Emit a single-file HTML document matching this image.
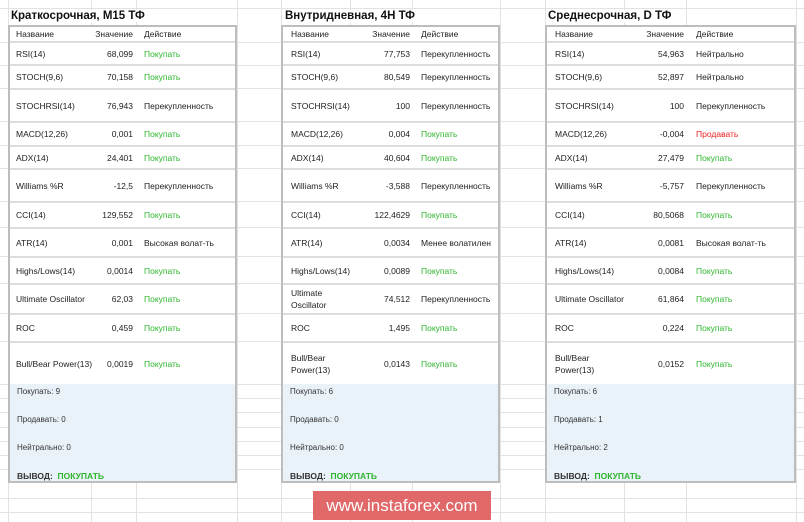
<!DOCTYPE html>
<html><head><meta charset="utf-8"><style>
body{margin:0;width:804px;height:522px;background:#fff;position:relative;overflow:hidden;font-family:"Liberation Sans",Arial,sans-serif;}
.hl{position:absolute;left:0;width:804px;height:1px;background:#e2e2e2}
.vl{position:absolute;top:0;height:522px;width:1px;background:#e2e2e2}
.title{position:absolute;top:10px;font-size:11.5px;font-weight:bold;color:#111;background:#fff}
.p{position:absolute;top:25px;height:458px;border:2px solid #bdbdbd;background:#fff;box-sizing:border-box}
.r{position:absolute;left:0;right:0;border-bottom:2px solid #ddd;box-sizing:border-box;font-size:8.5px;color:#222;font-weight:normal}
.r span{position:absolute;top:50%;transform:translateY(-50%);line-height:12px}
.g{color:#2db52d}.red{color:#e82020}
.s{position:absolute;left:0;right:0;top:357px;bottom:0;background:#eaf2f9}
.s div{position:absolute;left:7px;font-size:8px;color:#333}
.wm{position:absolute;left:313px;top:491px;width:178px;height:29px;background:#e06868;color:#fff;font-size:17px;text-align:center;line-height:29px}
</style></head><body>
<div class="hl" style="top:8px"></div><div class="hl" style="top:42px"></div><div class="hl" style="top:65px"></div><div class="hl" style="top:88px"></div><div class="hl" style="top:121px"></div><div class="hl" style="top:145px"></div><div class="hl" style="top:168px"></div><div class="hl" style="top:201px"></div><div class="hl" style="top:227px"></div><div class="hl" style="top:256px"></div><div class="hl" style="top:283px"></div><div class="hl" style="top:313px"></div><div class="hl" style="top:341px"></div><div class="hl" style="top:384px"></div><div class="hl" style="top:398px"></div><div class="hl" style="top:412px"></div><div class="hl" style="top:427px"></div><div class="hl" style="top:441px"></div><div class="hl" style="top:455px"></div><div class="hl" style="top:469px"></div><div class="hl" style="top:498px"></div><div class="hl" style="top:512px"></div>
<div class="vl" style="left:8px"></div><div class="vl" style="left:91px"></div><div class="vl" style="left:136px"></div><div class="vl" style="left:237px"></div><div class="vl" style="left:281px"></div><div class="vl" style="left:350px"></div><div class="vl" style="left:412px"></div><div class="vl" style="left:500px"></div><div class="vl" style="left:545px"></div><div class="vl" style="left:624px"></div><div class="vl" style="left:686px"></div><div class="vl" style="left:796px"></div>

<div class="title" style="left:11px">Краткосрочная, M15 ТФ</div>
<div class="title" style="left:285px">Внутридневная, 4H ТФ</div>
<div class="title" style="left:548px">Среднесрочная, D ТФ</div>

<!-- Panel 1 -->
<div class="p" style="left:8px;width:229px">
<div class="r" style="top:0;height:16px"><span style="left:6px">Название</span><span style="right:102px">Значение</span><span style="left:134px">Действие</span></div>
<div class="r" style="top:16px;height:23px"><span style="left:6px">RSI(14)</span><span style="right:102px">68,099</span><span class="g" style="left:134px">Покупать</span></div>
<div class="r" style="top:39px;height:24px"><span style="left:6px">STOCH(9,6)</span><span style="right:102px">70,158</span><span class="g" style="left:134px">Покупать</span></div>
<div class="r" style="top:63px;height:33px"><span style="left:6px">STOCHRSI(14)</span><span style="right:102px">76,943</span><span style="left:134px">Перекупленность</span></div>
<div class="r" style="top:96px;height:24px"><span style="left:6px">MACD(12,26)</span><span style="right:102px">0,001</span><span class="g" style="left:134px">Покупать</span></div>
<div class="r" style="top:120px;height:23px"><span style="left:6px">ADX(14)</span><span style="right:102px">24,401</span><span class="g" style="left:134px">Покупать</span></div>
<div class="r" style="top:143px;height:33px"><span style="left:6px">Williams %R</span><span style="right:102px">-12,5</span><span style="left:134px">Перекупленность</span></div>
<div class="r" style="top:176px;height:26px"><span style="left:6px">CCI(14)</span><span style="right:102px">129,552</span><span class="g" style="left:134px">Покупать</span></div>
<div class="r" style="top:202px;height:29px"><span style="left:6px">ATR(14)</span><span style="right:102px">0,001</span><span style="left:134px">Высокая волат-ть</span></div>
<div class="r" style="top:231px;height:27px"><span style="left:6px">Highs/Lows(14)</span><span style="right:102px">0,0014</span><span class="g" style="left:134px">Покупать</span></div>
<div class="r" style="top:258px;height:30px"><span style="left:6px">Ultimate Oscillator</span><span style="right:102px">62,03</span><span class="g" style="left:134px">Покупать</span></div>
<div class="r" style="top:288px;height:28px"><span style="left:6px">ROC</span><span style="right:102px">0,459</span><span class="g" style="left:134px">Покупать</span></div>
<div class="r" style="top:316px;height:41px;border:0"><span style="left:6px">Bull/Bear Power(13)</span><span style="right:102px">0,0019</span><span class="g" style="left:134px">Покупать</span></div>
<div class="s"><div style="top:3px">Покупать: 9</div><div style="top:31px">Продавать: 0</div><div style="top:59px">Нейтрально: 0</div><div style="top:87px;font-size:8.5px;font-weight:bold">ВЫВОД:&nbsp; <span class="g">ПОКУПАТЬ</span></div></div>
</div>

<!-- Panel 2 -->
<div class="p" style="left:281px;width:219px">
<div class="r" style="top:0;height:16px"><span style="left:8px">Название</span><span style="right:88px">Значение</span><span style="left:138px">Действие</span></div>
<div class="r" style="top:16px;height:23px"><span style="left:8px">RSI(14)</span><span style="right:88px">77,753</span><span style="left:138px">Перекупленность</span></div>
<div class="r" style="top:39px;height:24px"><span style="left:8px">STOCH(9,6)</span><span style="right:88px">80,549</span><span style="left:138px">Перекупленность</span></div>
<div class="r" style="top:63px;height:33px"><span style="left:8px">STOCHRSI(14)</span><span style="right:88px">100</span><span style="left:138px">Перекупленность</span></div>
<div class="r" style="top:96px;height:24px"><span style="left:8px">MACD(12,26)</span><span style="right:88px">0,004</span><span class="g" style="left:138px">Покупать</span></div>
<div class="r" style="top:120px;height:23px"><span style="left:8px">ADX(14)</span><span style="right:88px">40,604</span><span class="g" style="left:138px">Покупать</span></div>
<div class="r" style="top:143px;height:33px"><span style="left:8px">Williams %R</span><span style="right:88px">-3,588</span><span style="left:138px">Перекупленность</span></div>
<div class="r" style="top:176px;height:26px"><span style="left:8px">CCI(14)</span><span style="right:88px">122,4629</span><span class="g" style="left:138px">Покупать</span></div>
<div class="r" style="top:202px;height:29px"><span style="left:8px">ATR(14)</span><span style="right:88px">0,0034</span><span style="left:138px">Менее волатилен</span></div>
<div class="r" style="top:231px;height:27px"><span style="left:8px">Highs/Lows(14)</span><span style="right:88px">0,0089</span><span class="g" style="left:138px">Покупать</span></div>
<div class="r" style="top:258px;height:30px"><span style="left:8px">Ultimate<br>Oscillator</span><span style="right:88px">74,512</span><span style="left:138px">Перекупленность</span></div>
<div class="r" style="top:288px;height:28px"><span style="left:8px">ROC</span><span style="right:88px">1,495</span><span class="g" style="left:138px">Покупать</span></div>
<div class="r" style="top:316px;height:41px;border:0"><span style="left:8px">Bull/Bear<br>Power(13)</span><span style="right:88px">0,0143</span><span class="g" style="left:138px">Покупать</span></div>
<div class="s"><div style="top:3px">Покупать: 6</div><div style="top:31px">Продавать: 0</div><div style="top:59px">Нейтрально: 0</div><div style="top:87px;font-size:8.5px;font-weight:bold">ВЫВОД:&nbsp; <span class="g">ПОКУПАТЬ</span></div></div>
</div>

<!-- Panel 3 -->
<div class="p" style="left:545px;width:251px">
<div class="r" style="top:0;height:16px"><span style="left:8px">Название</span><span style="right:110px">Значение</span><span style="left:149px">Действие</span></div>
<div class="r" style="top:16px;height:23px"><span style="left:8px">RSI(14)</span><span style="right:110px">54,963</span><span style="left:149px">Нейтрально</span></div>
<div class="r" style="top:39px;height:24px"><span style="left:8px">STOCH(9,6)</span><span style="right:110px">52,897</span><span style="left:149px">Нейтрально</span></div>
<div class="r" style="top:63px;height:33px"><span style="left:8px">STOCHRSI(14)</span><span style="right:110px">100</span><span style="left:149px">Перекупленность</span></div>
<div class="r" style="top:96px;height:24px"><span style="left:8px">MACD(12,26)</span><span style="right:110px">-0,004</span><span class="red" style="left:149px">Продавать</span></div>
<div class="r" style="top:120px;height:23px"><span style="left:8px">ADX(14)</span><span style="right:110px">27,479</span><span class="g" style="left:149px">Покупать</span></div>
<div class="r" style="top:143px;height:33px"><span style="left:8px">Williams %R</span><span style="right:110px">-5,757</span><span style="left:149px">Перекупленность</span></div>
<div class="r" style="top:176px;height:26px"><span style="left:8px">CCI(14)</span><span style="right:110px">80,5068</span><span class="g" style="left:149px">Покупать</span></div>
<div class="r" style="top:202px;height:29px"><span style="left:8px">ATR(14)</span><span style="right:110px">0,0081</span><span style="left:149px">Высокая волат-ть</span></div>
<div class="r" style="top:231px;height:27px"><span style="left:8px">Highs/Lows(14)</span><span style="right:110px">0,0084</span><span class="g" style="left:149px">Покупать</span></div>
<div class="r" style="top:258px;height:30px"><span style="left:8px">Ultimate Oscillator</span><span style="right:110px">61,864</span><span class="g" style="left:149px">Покупать</span></div>
<div class="r" style="top:288px;height:28px"><span style="left:8px">ROC</span><span style="right:110px">0,224</span><span class="g" style="left:149px">Покупать</span></div>
<div class="r" style="top:316px;height:41px;border:0"><span style="left:8px">Bull/Bear<br>Power(13)</span><span style="right:110px">0,0152</span><span class="g" style="left:149px">Покупать</span></div>
<div class="s"><div style="top:3px">Покупать: 6</div><div style="top:31px">Продавать: 1</div><div style="top:59px">Нейтрально: 2</div><div style="top:87px;font-size:8.5px;font-weight:bold">ВЫВОД:&nbsp; <span class="g">ПОКУПАТЬ</span></div></div>
</div>

<div class="wm">www.instaforex.com</div>
</body></html>
